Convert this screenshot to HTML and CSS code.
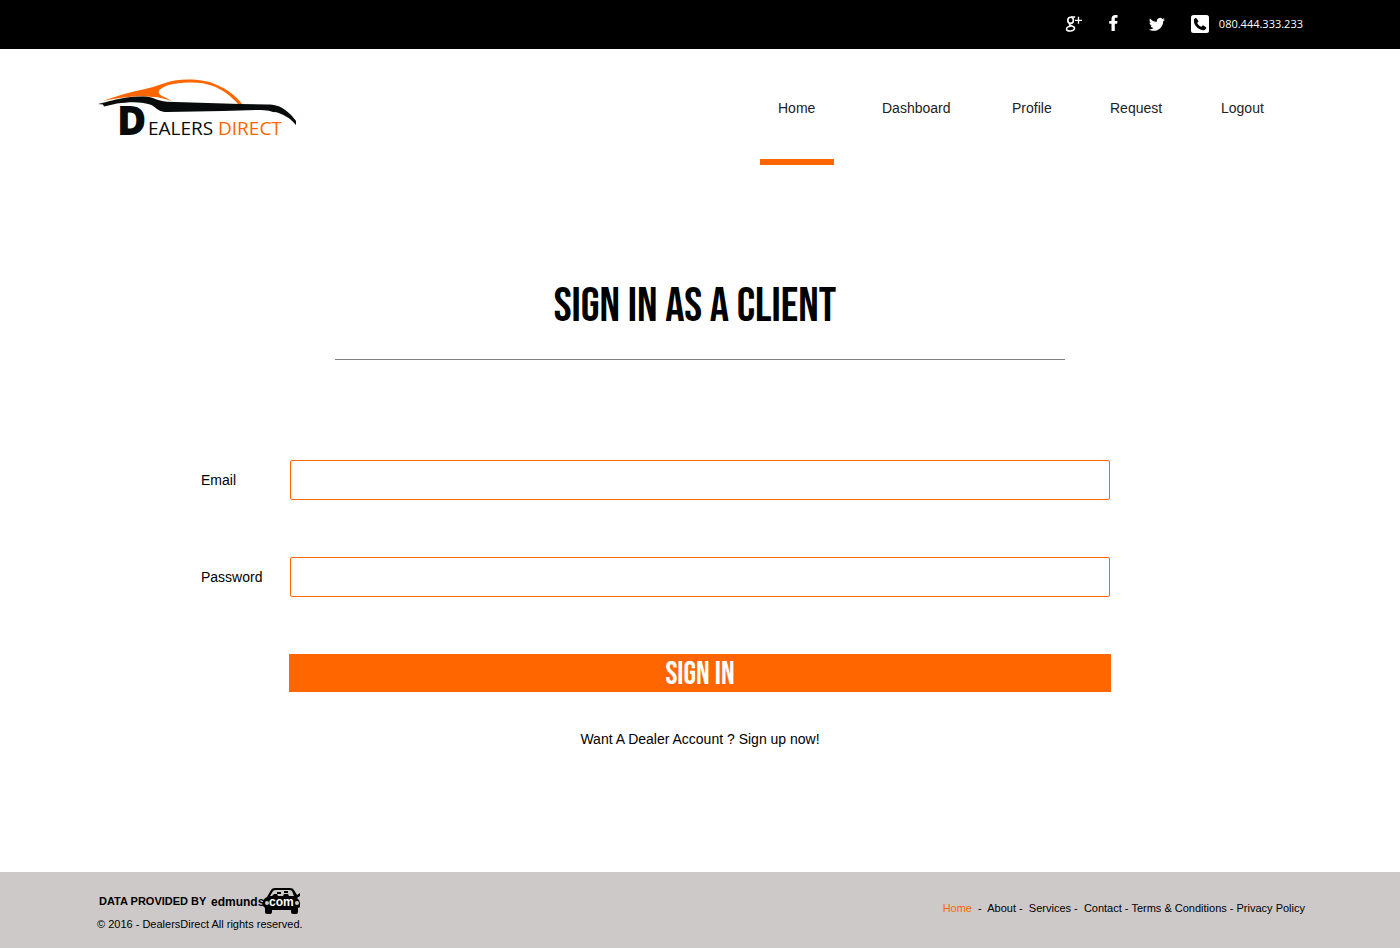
FILE: index.html
```html
<!DOCTYPE html>
<html lang="en">
<head>
<meta charset="utf-8">
<title>Dealers Direct - Sign in as a client</title>
<link rel="stylesheet" href="styles.css">
</head>
<body>
<div class="topbar">
  <div class="topbar__inner">
    <a class="social" href="#" aria-label="Google Plus">
      <svg width="18" height="18" viewBox="0 0 18 18" fill="none" stroke="#fff"><ellipse cx="5.600" cy="5.300" rx="2.800" ry="3.100" stroke-width="1.600"/><path d="M6 2h4.200M5.200 8.400C3.800 9.400 4.600 10.200 6.400 10.800C8.900 11.600 9.800 12.400 9.500 13.700C8.900 16.600 1.800 16.800 1.500 14.100C1.400 12.100 4.200 11 6.500 11" stroke-width="1.500"/><path d="M13.500 1.800v7M10 5.300h7" stroke-width="1.300"/></svg>
    </a>
    <a class="social" href="#" aria-label="Facebook">
      <svg width="18" height="18" viewBox="0 0 18 18" fill="#fff"><path d="M4.500 16V8.800H2.200V5.900H4.500V3.800C4.500 1.300 6 0 8.200 0H10.500v2.800H9.200C8 2.800 7.800 3.300 7.800 4.200V5.900H10.500l-.4 2.900H7.800V16z"/></svg>
    </a>
    <a class="social" href="#" aria-label="Twitter">
      <svg width="18" height="18" viewBox="0 0 18 18" fill="#fff"><path d="M16 4.400c-.6.300-1.200.5-1.900.5.700-.4 1.200-1 1.400-1.800-.6.400-1.300.7-2.100.8A3.300 3.300 0 0 0 7.800 6.900C5 6.800 2.600 5.500 1 3.500c-.9 1.500-.4 3.400 1 4.400-.5 0-1-.2-1.500-.4 0 1.600 1.100 2.900 2.600 3.200-.5.100-1 .2-1.500.1.400 1.300 1.600 2.200 3.100 2.300A6.600 6.600 0 0 1 0 14.400c6 3.700 14-.1 14.300-8.400.7-.4 1.300-1 1.700-1.600z"/></svg>
    </a>
    <a class="phone" href="tel:080444333233">
      <svg width="18" height="18" viewBox="0 0 18 18"><rect width="18" height="18" rx="2.500" fill="#fff"/><path d="M3 4.600C3.400 3.600 4.300 3 5.200 3L7.600 6.300L6.200 7.900C7 9.700 8.500 11 10.300 11.800L12 10.300L15.300 12.500C15.200 13.600 14.500 14.400 13.500 14.900C8.500 16.500 1.800 10 3 4.600z" fill="#000"/></svg>
      <span>080.444.333.233</span>
    </a>
  </div>
</div>

<header class="header">
  <a class="logo" href="#" aria-label="Dealers Direct">
    <svg width="206" height="70" viewBox="0 0 206 70">
      <path d="M5 24C18 19 32 15 47 12C52 11 58 9 64 7C72 4 81 2.600 90 2.600C101 2.600 110 4 119 8C129 12 138 19 144 27H140C133 19 125 13 115 9C107 6 99 5 90 5.500C79 6 71 7 65 10.500C60 13 59 16 64 19C68 21 71 22 73 24C67 22 61 20 55 20C37 18 20 21 5 24z" fill="#f60"/>
      <path d="M0 27C9 25 15 23 22 21.800C34 19.500 46 18.500 55 21C60 23 64 24.500 69 24.800L142 27L169 27.500C177 27.500 182 29.500 185 31.500C192 36 196 41 198 44V48C195 45 193 42 189 40C184 37 180 35 175 35C170 33 163 33 158 33L125 34L69 35C63 35 61 33 59 32C56 30 55 28 52 27.500C41 24 30 25 19 26.500L6 29.500L5 27.500z" fill="#070b0b"/>
      <text class="logo__initial" x="19" y="58">D</text>
      <text class="logo__word" x="50" y="58">EALERS</text>
      <text class="logo__word logo__word--accent" x="120" y="58">DIRECT</text>
    </svg>
  </a>
  <nav class="nav" aria-label="Main">
    <a class="nav__link nav__link--active" href="#">Home</a>
    <a class="nav__link" href="#">Dashboard</a>
    <a class="nav__link" href="#">Profile</a>
    <a class="nav__link" href="#">Request</a>
    <a class="nav__link" href="#">Logout</a>
  </nav>
</header>

<main class="main">
  <h1 class="title">SIGN IN AS A CLIENT</h1>
  <form class="form">
    <div class="field">
      <label class="field__label" for="email">Email</label>
      <input class="field__input" id="email" type="email">
    </div>
    <div class="field">
      <label class="field__label" for="password">Password</label>
      <input class="field__input" id="password" type="password">
    </div>
    <button class="submit" type="submit">SIGN IN</button>
  </form>
  <a class="signup" href="#">Want A Dealer Account ? Sign up now!</a>
</main>

<footer class="footer">
  <div class="footer__inner">
    <div class="credits">
      <div class="provider">
        <span>DATA PROVIDED BY</span>
        <svg width="92" height="28" viewBox="0 0 92 28">
          <text class="provider__name" x="1" y="19">edmunds</text>
          <path d="M57 10L61 3Q62 1 65 1H80Q83 1 84 3L87 8L90 6V9L87 11Q90 13 90 16V20L88 21V25Q88 27 86 27H83Q81 27 81 25V23H62V25Q62 27 60 27H57Q55 27 55 25V21L53 19V15Q53 12 57 10z" fill="#000"/>
          <path d="M60 9L63 4Q64 3 66 3H79Q81 3 82 4L84 9H79L78 7H74L73 9H68L67 7H64L62 9z" fill="#cdc9c9"/>
          <path d="M67 5h4v2h-4zM74 4h4v2h-4z" fill="#000"/>
          <circle cx="57" cy="16" r="2" fill="#cdc9c9"/><circle cx="87" cy="16" r="2" fill="#cdc9c9"/>
          <text class="provider__name provider__name--light" x="59" y="19">com</text>
        </svg>
      </div>
      <p class="copyright">© 2016 - DealersDirect All rights reserved.</p>
    </div>
    <nav class="links" aria-label="Footer"><a class="links__active" href="#">Home</a>&nbsp; -&nbsp; <a href="#">About</a> -&nbsp; <a href="#">Services</a> -&nbsp; <a href="#">Contact</a> - <a href="#">Terms &amp; Conditions</a> - <a href="#">Privacy Policy</a></nav>
  </div>
</footer>
</body>
</html>
```
FILE: styles.css
```css
* { box-sizing: border-box; }

body {
  margin: 0;
  min-height: 100vh;
  display: flex;
  flex-direction: column;
  background: #fff;
  color: #000;
  font: 14px/20px "Liberation Sans", Arial, sans-serif;
}

a { color: inherit; text-decoration: none; }
svg { display: block; }

.topbar { background: #000; color: #fff; }
.topbar__inner {
  display: flex;
  align-items: center;
  justify-content: flex-end;
  gap: 24px;
  padding: 14px 97px 15px;
}
.phone {
  display: flex;
  align-items: center;
  gap: 10px;
  font: 11px/20px "Open Sans", "Noto Sans", sans-serif;
}

.header {
  display: flex;
  justify-content: space-between;
  align-items: flex-start;
  padding: 0 118px 0 98px;
}
.logo { margin-top: 28px; }
.logo__initial { font: 800 40px "Open Sans", sans-serif; fill: #070b0b; }
.logo__word { font: 19px "Open Sans", sans-serif; fill: #070b0b; }
.logo__word--accent { fill: #f60; }

.nav {
  display: grid;
  grid-template-columns: 82px 108px 76px 89px 79px;
  column-gap: 22px;
  justify-items: start;
  color: #222;
}
.nav__link {
  min-width: 74px;
  padding: 49px 18px 41px;
  border-bottom: 6px solid transparent;
}
.nav__link--active { border-color: #f60; }

.main {
  flex: 1;
  display: flex;
  flex-direction: column;
  align-items: center;
  padding: 115px 24px 48px;
}
.title {
  width: 100%;
  max-width: 730px;
  margin: 0;
  padding: 0 10px 25px 0;
  border-bottom: 1px solid #808080;
  text-align: center;
  font: normal 48px/54px "Bebas Neue", "Liberation Sans", sans-serif;
}
.form {
  width: 100%;
  max-width: 998px;
  margin: 100px 0 0;
  padding-right: 88px;
  display: grid;
  gap: 57px;
}
.field {
  display: grid;
  grid-template-columns: 89px 1fr;
  align-items: center;
  padding-right: 1px;
}
.field__input {
  width: 100%;
  height: 40px;
  padding: 0 12px;
  border: 1px solid #f60;
  border-radius: 2px;
  background: #fff;
  font: inherit;
}
.submit {
  height: 38px;
  margin-left: 88px;
  padding: 4px 0 0;
  border: 0;
  background: #f60;
  color: #fff;
  font: normal 32px/34px "Bebas Neue", "Liberation Sans", sans-serif;
}
.signup { margin-top: 37px; }

.footer { background: #cdc9c9; font-size: 11px; line-height: 16px; }
.footer__inner {
  display: flex;
  align-items: center;
  justify-content: space-between;
  padding: 15px 95px 16px 97px;
}
.provider {
  display: flex;
  align-items: center;
  gap: 4px;
  padding-left: 2px;
  font-weight: bold;
}
.provider__name { font: bold 12px "Liberation Sans", sans-serif; }
.provider__name--light { fill: #fff; }
.copyright { margin: 1px 0 0; }
.links { padding-bottom: 3px; }
.links__active { color: #f60; }
```
